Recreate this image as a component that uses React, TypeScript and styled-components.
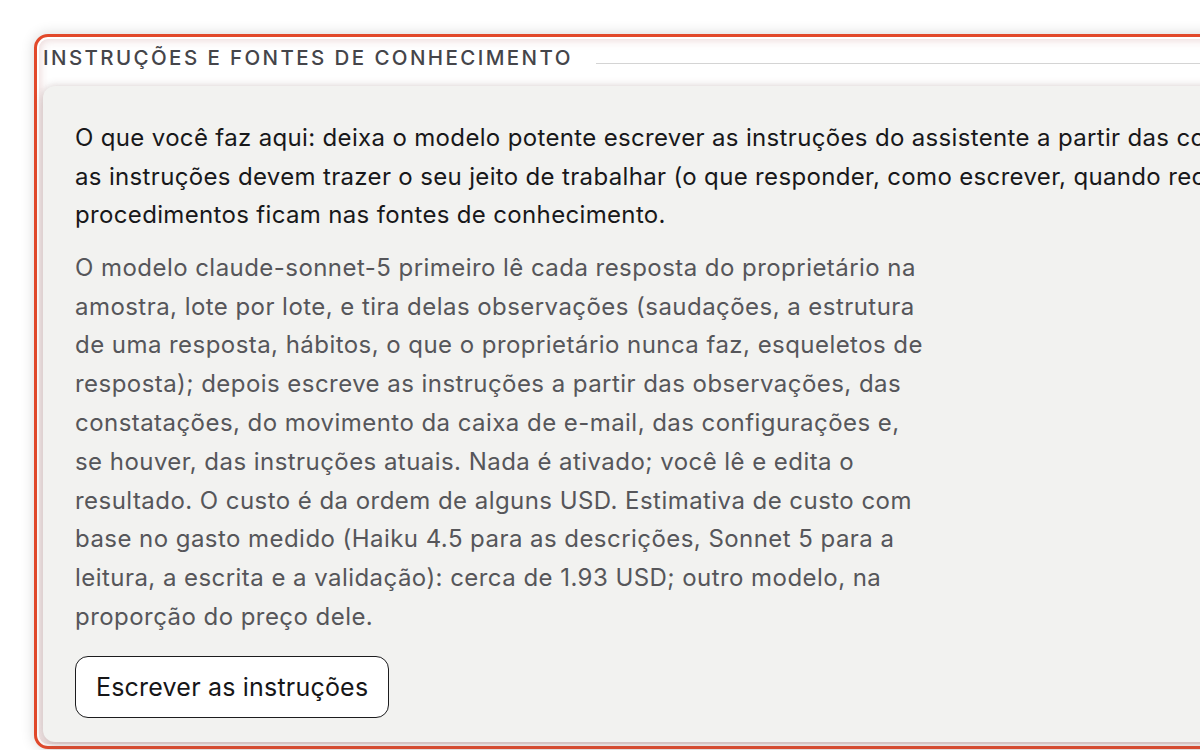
import styled, { createGlobalStyle } from 'styled-components'

const GlobalStyle = createGlobalStyle`
    html, body {
        margin: 0;
        padding: 0;
        background: #ffffff;
        overflow: hidden;
    }
    body {
        font-family: Inter, "Noto Sans", "Liberation Sans", sans-serif;
        -webkit-font-smoothing: antialiased;
    }
`

const Page = styled.div`
    width: 1200px;
    height: 750px;
    padding: 34px 0 0 34px;
    box-sizing: border-box;
    overflow: hidden;
`

const Frame = styled.section`
    width: 1400px;
    box-sizing: border-box;
    padding: 8px 0 4px 6px;
    background: #ffffff;
    border: 3px solid #e2492b;
    border-radius: 14px;
    box-shadow:
        0 0 14px rgba(0, 0, 0, 0.16),
        inset 0 0 0 2px #ffffff,
        inset 0 0 10px 3px rgba(190, 120, 120, 0.3);
`

const LegendRow = styled.div`
    display: flex;
    align-items: center;
    gap: 23px;
    height: 24px;
`

const Legend = styled.h2`
    margin: 0;
    font-size: 20.5px;
    font-weight: 500;
    letter-spacing: 2.4px;
    text-transform: uppercase;
    color: #45454a;
    white-space: nowrap;
`

const Rule = styled.span`
    flex: 1;
    height: 0;
    margin-top: 13px;
    border-top: 1.5px solid #d4d4d4;
`

const Panel = styled.div`
    margin-top: 17px;
    padding: 33px 32px 24px;
    background: #f2f2f0;
    border-radius: 12px;
    box-shadow:
        0 0 8px rgba(120, 90, 90, 0.28),
        0 6px 10px rgba(150, 100, 100, 0.22);
`

const Lead = styled.p`
    margin: 0 0 14px;
    white-space: nowrap;
    font-size: 24px;
    letter-spacing: 0.34px;
    line-height: 38.6px;
    color: #18181a;
`

const Body = styled.p`
    margin: 0 0 19px;
    max-width: 858px;
    font-size: 24px;
    letter-spacing: 0.45px;
    line-height: 38.8px;
    color: #56565a;
`

const Button = styled.button`
    height: 62px;
    padding: 0 20px;
    font-family: inherit;
    font-size: 25px;
    letter-spacing: 0.2px;
    color: #161618;
    background: #ffffff;
    border: 1.5px solid #1c1c1e;
    border-radius: 13px;
    cursor: pointer;
`

export default function App() {
    return (
        <>
            <GlobalStyle />
            <Page>
                <Frame>
                    <LegendRow>
                        <Legend>Instruções e fontes de conhecimento</Legend>
                        <Rule />
                    </LegendRow>
                    <Panel>
                        <Lead>
                            O que você faz aqui: deixa o modelo potente escrever as
                            instruções do assistente a partir das conversas reais;
                            <br />
                            as instruções devem trazer o seu jeito de trabalhar (o que
                            responder, como escrever, quando recorrer a alguém); fatos e
                            <br />
                            procedimentos ficam nas fontes de conhecimento.
                        </Lead>
                        <Body>
                            O modelo claude-sonnet-5 primeiro lê cada resposta do
                            proprietário na amostra, lote por lote, e tira delas
                            observações (saudações, a estrutura de uma resposta,
                            hábitos, o que o proprietário nunca faz, esqueletos de
                            resposta); depois escreve as instruções a partir das
                            observações, das constatações, do movimento da caixa de
                            e-mail, das configurações e, se houver, das instruções
                            atuais. Nada é ativado; você lê e edita o resultado. O
                            custo é da ordem de alguns USD. Estimativa de custo com
                            base no gasto medido (Haiku 4.5 para as descrições, Sonnet
                            5 para a leitura, a escrita e a validação): cerca de 1.93
                            USD; outro modelo, na proporção do preço dele.
                        </Body>
                        <Button type="button">Escrever as instruções</Button>
                    </Panel>
                </Frame>
            </Page>
        </>
    )
}
